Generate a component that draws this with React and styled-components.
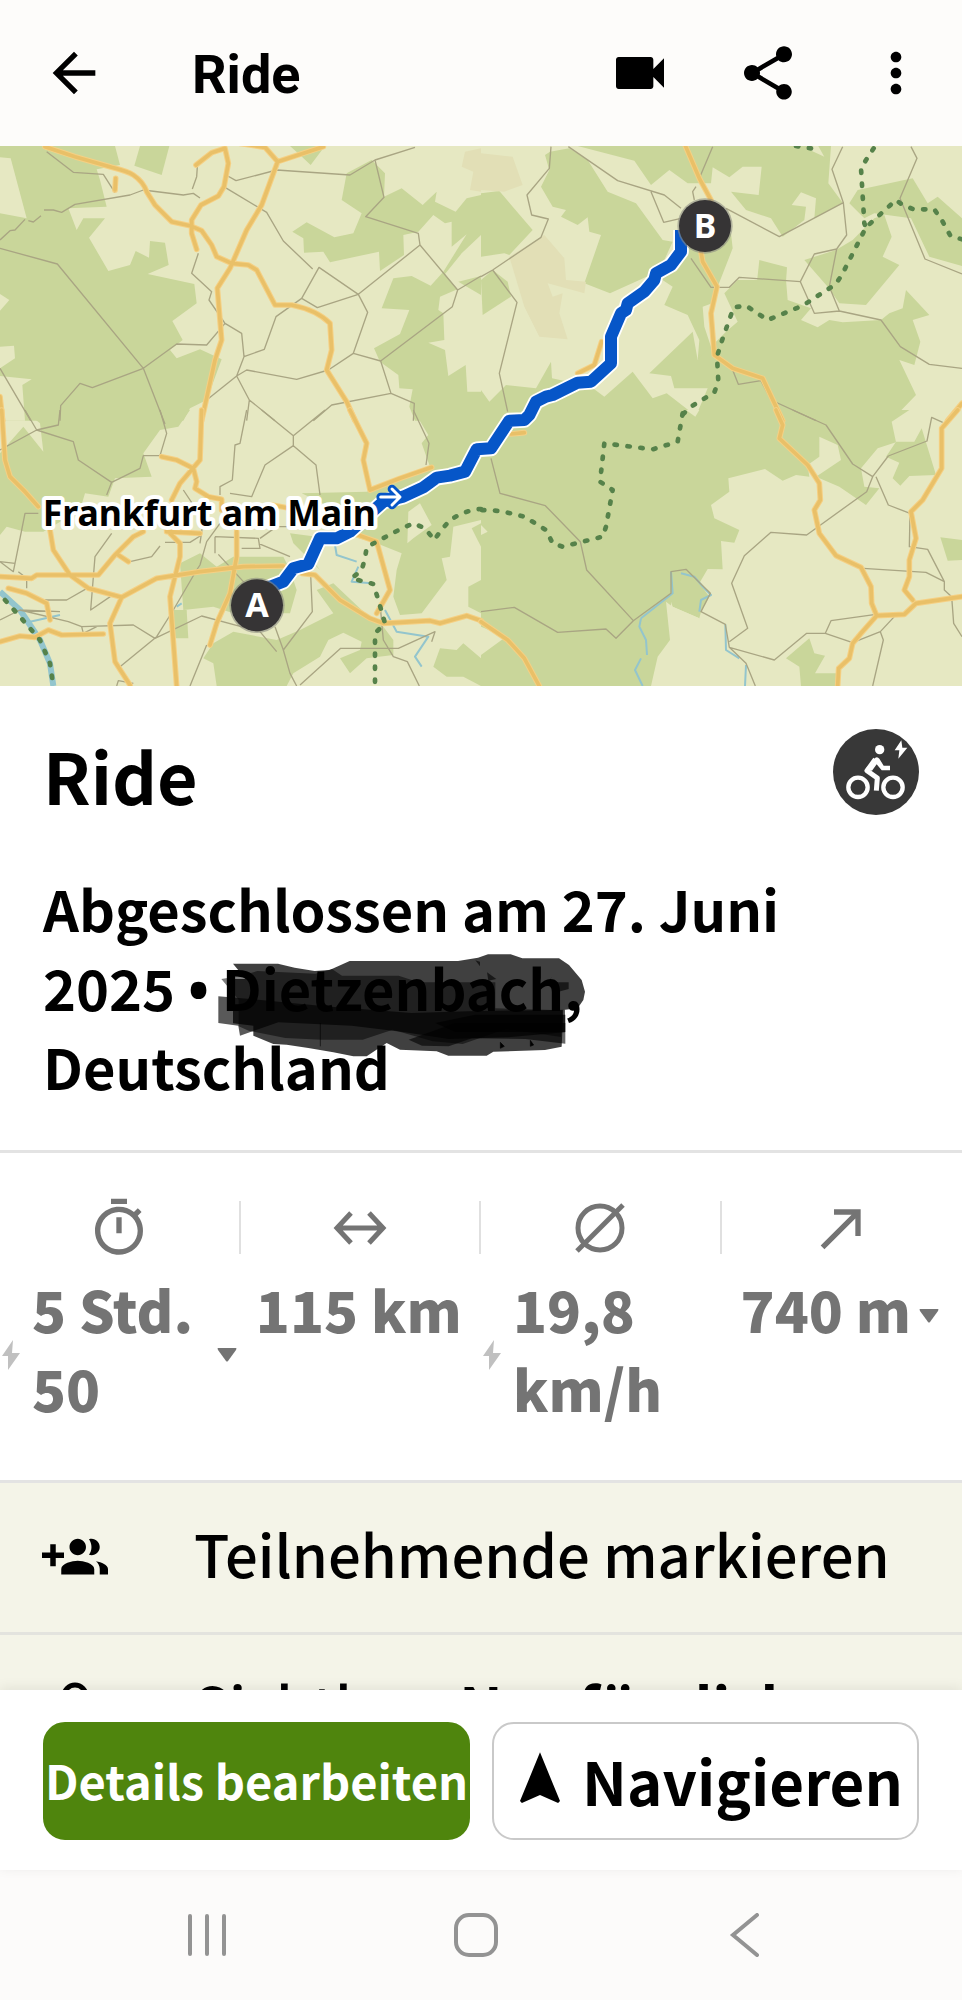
import React from 'react';
import styled, { createGlobalStyle, css } from 'styled-components';
import {
  MdArrowBack,
  MdVideocam,
  MdShare,
  MdMoreVert,
  MdOutlineTimer,
  MdCallMade,
  MdNavigation,
} from 'react-icons/md';

const stats = [
  { label: 'Dauer', value: '5 Std. 50', icon: <MdOutlineTimer />, electric: true, expandable: true },
  { label: 'Distanz', value: '115 km', icon: <DistanceIcon /> },
  { label: 'Durchschnitt', value: '19,8 km/h', icon: <AverageIcon />, electric: true },
  { label: 'Bergauf', value: '740 m', icon: <MdCallMade />, expandable: true },
];

// The map is drawn in four tiles, each with its own origin
const tiles = [
  {
    x: 0,
    y: -18,
    forest: [
      '0,18 345,18 360,75 290,88 300,120 320,200 205,205 230,270 250,235 315,235 267,293 325,393 390,375 407,333 447,353 450,303 495,308 506,375 443,402 583,432 590,490 517,543 548,600 510,630 530,655 600,628 665,658 620,780 570,805 550,842 0,842',
      '420,18 508,18 485,105 403,77',
      '870,18 975,18 932,75 900,45',
      '1040,100 1115,60 1155,100 1152,170 1205,145 1268,195 1310,155 1305,185 1367,215 1400,175 1443,165 1443,285 1385,340 1335,402 1372,448 1320,470 1315,510 1330,520 1333,600 1285,608 1335,630 1345,708 1397,675 1402,755 1443,755 1443,842 1245,842 1228,800 1238,748 1198,745 1195,705 1140,665 1122,625 1200,582 1228,510 1145,505 1180,415 1235,408 1292,437 1330,395 1400,283 1355,320 1355,245 1335,250 1300,225 1255,275 1210,285 1212,345 1140,393 1137,335 990,367 970,335 912,338 910,295 877,275 920,247 1003,292 1060,280 1085,220 1025,180',
      '1375,425 1443,408 1443,465',
    ],
    clearing: [
      '0,52 32,55 80,235 0,220',
      '0,462 28,480 0,512',
      '0,620 42,617 45,655 0,685',
      '0,708 95,718 67,735 75,842 0,842',
    ],
    sand: ['1395,35 1443,25 1443,155 1410,150 1420,95 1385,80'],
    lane: 'M140,35 220,97 310,103 345,158 M0,300 30,272 45,270 75,238 M85,242 100,246 123,227 M132,210 160,210 185,217 225,193 390,165 430,150 550,165 580,160 600,174 M0,325 172,372 430,685 495,852 M180,842 182,797 240,730 277,743 430,685 530,612 620,615 675,550 725,580 732,650 710,708 620,780 M0,685 92,842 M592,80 590,110 577,147 M678,105 708,122 830,90 1050,105 1125,60 1245,22 M675,142 800,217 850,303 938,387 M1125,60 1152,172 1097,230 1255,280 1260,315 1373,450 1357,500 1142,663 1173,760 1243,790 1240,842 M1260,315 1075,463 957,382 905,475 952,503 1075,463 1103,517 1060,640 985,690 890,718 740,690 710,708 748,780 740,842 M748,780 825,842 M905,475 828,530 793,628 732,650 M1060,640 1142,663 M1373,450 1443,408 M595,340 575,400 635,455 627,480 675,550 M940,842 995,795 1173,760',
    road: 'M135,20 225,50 335,82 Q385,95 400,105 430,125 440,155 L465,195 515,245 570,257 605,272 635,315 650,350 695,370 745,375 770,390 825,495 875,495 Q950,510 990,550 L995,630 980,690 1040,785 1065,842 M588,75 635,38 675,25 685,70 672,140 655,168 603,195 575,240 575,280 590,328 M720,10 795,22 833,65 970,20 M833,65 785,195 740,270 690,385 652,445 665,600 645,660 605,842 M347,115 345,150 M0,770 8,842',
  },
  {
    x: 1443,
    y: -18,
    forest: [
      '290,18 1050,18 1042,130 1085,188 1000,235 1005,175 960,157 932,195 975,200 970,240 905,290 870,235 795,210 750,155 833,165 842,80 785,80 745,112 695,82 690,130 620,130 565,90 510,135 460,62',
      '207,35 265,25 320,60 380,155 465,190 545,300 575,305 550,360 520,400 387,460 310,430 360,285 325,275 320,232 290,255 240,230 255,210 215,200 180,140 205,90 192,45',
      '620,320 750,280 755,325 710,440 680,520 700,640 650,660 655,600 620,525 550,495 575,440 530,410',
      '0,750 25,785 75,735 165,745 210,665 213,715 330,740 370,770 455,695 515,775 557,760 645,828 680,745 580,745 570,708 505,700 635,575 650,660 690,620 735,575 770,545 730,460 770,420 915,420 920,480 990,505 960,540 1010,562 1045,540 1085,547 1200,540 1225,520 1265,505 1275,450 1345,525 1295,540 1318,605 1300,675 1255,660 1305,765 1230,842 0,842',
      '835,360 918,382 915,425 828,425',
      '970,360 1065,330 1115,300 1180,235 1210,225 1232,290 1205,350 1255,375 1155,495 1075,490 1040,440',
      '1105,190 1130,150 1295,115 1340,190 1370,170 1443,235 1443,378 1345,350 1290,235 1180,220 1150,235',
      '0,160 55,153 155,270 85,345 70,340 0,350',
      '0,420 35,390 80,425 90,470 5,525',
    ],
    clearing: ['665,500 720,480 700,560 690,620 670,560', '975,25 1010,15 1030,50'],
    sand: [
      '0,40 95,50 125,135 70,155 0,150',
      '85,350 190,285 250,355 255,420 315,425 310,460 200,430 215,470 245,460 235,520 260,598 175,590 130,500',
    ],
    lane: 'M210,20 205,85 138,165 152,225 202,237 180,292 35,390 0,410 M35,390 108,487 55,700 80,815 M262,20 410,122 550,165 600,205 M510,155 548,247 600,235 M695,20 655,115 M640,180 635,155 645,140 M735,205 895,290 1087,188 1053,88 1085,20 M1087,188 1097,285 1067,327 1000,342 958,425 775,412 745,442 690,442 630,355 M958,425 1000,520 1075,513 1045,440 1067,327 M1075,513 1200,540 1258,620 1345,673 1443,685 M1290,20 1308,55 1257,175 1332,357 1443,402 M755,690 772,733 840,722 870,780 1005,842',
    road: 'M610,10 655,115 690,180 M660,335 665,365 708,440 690,520 700,645 755,685 845,715 905,842 M362,605 340,675 290,700 M1443,790 1400,842',
    border: 'M945,18 990,25 M1178,25 1155,60 1140,85 1150,250 1155,262 M1443,298 1408,287 1385,245 1360,208 1298,208 1265,195 1245,180 1155,262 1085,400 1065,432 965,497 860,540 795,497 758,502 720,610 708,650 712,725 700,757 630,800 603,825',
  },
  {
    x: 0,
    y: 792,
    forest: [
      '70,0 570,0 535,50 480,60 430,130 455,200 345,205 325,260 255,250 240,300 130,365 75,365 20,350 0,375 0,130 70,50 130,125 120,40',
      '1240,0 1443,0 1443,330 1360,350 1350,440 1325,445 1340,510 1265,610 1200,615 1180,560 1190,480 1205,430 1130,400 1060,380 1050,320 905,250 1100,245 1220,200 1290,170 1265,100 1285,75',
      '540,460 600,430 650,470 700,440 850,440 870,480 890,540 870,610 700,610 640,590 550,600',
      '640,700 700,665 830,690 900,660 1000,610 950,540 1000,520 1085,600 1150,650 1180,690 1180,735 1100,745 1050,790 1020,745 1080,720 1085,695 1030,668 985,690 960,740 880,790 860,828 650,828 640,760 610,745',
      '870,370 950,380 930,440 960,480 880,400',
      '520,600 560,600 565,685 525,685',
      '1300,770 1320,715 1370,720 1390,700 1443,745 1443,828 1390,800 1340,800',
      '1405,530 1443,510 1443,610 1405,590',
      '1415,355 1443,340 1443,410',
    ],
    clearing: ['1225,305 1260,280 1295,345 1240,385 1222,400'],
    water: 'M1005,405 1010,435 1070,455 M1075,470 1055,515 1115,520 M1155,600 1190,665 1285,680 1245,740 1265,770 M90,635 180,615 M530,590 545,580',
    river: 'M0,545 60,600 120,690 150,760 160,828',
    lane: 'M75,0 110,60 175,45 180,0 M0,120 110,60 220,95 235,150 335,217 420,175 430,137 480,137 500,70 480,0 M335,217 320,255 M115,310 75,310 45,460 0,455 40,485 45,460 M335,370 285,440 272,600 345,550 M740,0 720,100 705,105 697,210 660,230 660,255 M785,0 880,77 975,0 M880,77 880,107 948,165 960,255 M880,107 795,165 755,260 690,250 M600,465 590,480 520,600 470,680 360,770 M600,465 620,395 660,340 M0,630 60,600 205,635 245,650 400,645 465,685 605,618 780,665 830,725 M60,600 180,605 M645,380 775,385 780,415 725,415 M645,380 645,430 M655,433 735,520 M775,400 870,440 M932,495 937,605 850,720 825,650 M850,720 870,790 890,828 M900,825 1022,715 1195,715 1305,665 1295,695 M1140,580 1150,690 1180,740 1222,755 1258,828 M620,705 570,828 M135,570 200,570 270,530 M350,828 355,812 400,820 M495,397 570,397 605,375 M390,455 455,440 480,408 M1240,0 1287,100 1278,165 M550,240 610,330 600,400 M780,385 830,350 880,350 M55,485 80,505 80,535 M245,650 250,670 290,650',
    road: 'M605,0 600,150 540,220 515,270 M485,140 530,150 580,175 590,215 585,235 625,260 665,268 665,300 M1050,0 1100,100 1090,150 1110,240 M5,0 15,150 30,200 75,245 115,290 M150,360 160,420 210,495 265,535 365,562 M0,500 95,505 110,495 295,495 345,435 400,380 430,365 M355,435 385,455 M365,562 470,505 600,485 730,470 850,468 M500,360 540,400 540,440 510,560 530,828 M365,562 330,640 345,755 390,825 M710,365 710,440 690,550 650,640 630,705 M1110,240 1200,205 1295,172 M1060,370 1130,395 1170,540 1130,610 M905,490 945,495 1020,570 1110,625 1150,640 1290,632 1320,640 1400,617 1443,632 M25,535 80,550 140,580 150,630 M0,695 60,678 105,682 145,660 185,675 310,672 M815,285 870,295 M500,365 600,370',
    border: 'M1443,297 1425,298 1385,310 1350,330 1320,365 1303,390 1275,355 1240,340 1200,358 1130,395 1100,412 1095,445 1085,480 1055,505 1120,522 1135,570 1155,640 1125,670 1125,828 M15,570 60,620 120,690 150,760 160,828',
  },
  {
    x: 1443,
    y: 792,
    forest: [
      '0,0 1285,0 1232,35 1245,97 1190,115 1140,175 1150,230 1195,235 1155,285 1075,230 1005,200 1080,150 1070,105 1015,80 1015,140 980,165 985,200 945,195 905,212 852,177 742,205 745,245 690,285 700,325 775,360 760,398 720,393 725,478 680,477 655,520 685,560 660,605 655,625 575,590 555,575 567,690 530,740 510,828 0,828 0,735 75,680 0,650',
      '1245,95 1300,95 1322,55 1365,195 1285,198 1258,227 1235,205 1255,158 1215,140',
      '1378,382 1443,390 1443,450 1400,452',
      '915,745 985,685 1000,730 1032,737 1002,790 1065,790 1065,828 960,828 955,770',
    ],
    clearing: ['0,345 20,365 0,375', '615,0 655,0 643,20', '570,575 575,590 655,625 567,690'],
    water: 'M480,625 475,650 495,690 498,735 M480,745 462,780 485,828 M570,485 575,550 480,625 M733,643 735,720 775,745 M600,490 640,500 665,530 690,555 660,570 655,605 M795,765 792,828',
    lane: 'M30,145 57,250 193,287 298,395 317,480 457,632 570,550 570,485 615,478 688,550 660,605 733,643 745,712 880,750 977,670 1033,670 1050,632 1185,613 M0,605 100,592 230,667 375,657 405,685 457,632 M745,712 795,760 823,828 M745,695 800,655 752,520 790,437 870,367 977,375 1157,245 1175,200 1115,162 1035,45 935,0 M1175,200 1222,138 1338,93 1352,22 1385,37 M1185,200 1222,285 1287,310 1285,410 1340,418 1390,515 1390,540 1412,560 1418,640 1443,680 M1147,475 1335,487 1390,515 M1033,670 1115,698 1198,665 1240,620 M1198,665 1207,690 1175,828',
    road: 'M885,0 905,45 895,85 980,165 1015,220 1018,270 1000,300 1015,370 1065,437 1140,472 1170,530 1172,580 1187,617 1140,670 1115,700 1105,745 1073,775 1070,828 M1187,617 1270,613 1305,580 1443,560 M1430,0 1382,55 1382,175 1325,270 1290,305 1305,385 1285,450 1285,500 1270,540 1295,570 M90,72 130,68 M0,635 80,690 130,745 175,828',
    border: 'M605,10 590,95 515,118 370,100 357,215 395,240 375,350 365,380 245,410 215,400 195,360 130,320 60,303 0,300',
  },
];

const route =
  'M2043,252 2043,317 2013,357 1968,382 1963,402 1933,437 1883,472 1878,492 1863,502 1833,572 1833,652 1773,707 1733,710 1658,747 1638,752 1608,767 1588,807 1573,822 1528,824 1473,907 1430,910 1395,977 1350,989 1310,995 1270,1024 1210,1052 1150,1067 1050,1157 1010,1177 960,1177 925,1254 880,1267 850,1307 790,1330';

const App = () => {
  return (
    <Screen>
      <GlobalStyle />

      <TopBar>
        <IconButton aria-label="Zurück"><MdArrowBack /></IconButton>
        <TopTitle>Ride</TopTitle>
        <IconButton aria-label="Video"><MdVideocam /></IconButton>
        <IconButton aria-label="Teilen"><MdShare /></IconButton>
        <IconButton aria-label="Mehr"><MdMoreVert /></IconButton>
      </TopBar>

      <Content>
        <RouteMap />

        <Summary>
          <SummaryHead>
            <h1>Ride</h1>
            <EBikeIcon />
          </SummaryHead>
          <Meta>
            Abgeschlossen am 27. Juni 2025 <Bullet>•</Bullet>{' '}
            <Place>
              Dietzenbach,
              <Scribble />
            </Place>{' '}
            Deutschland
          </Meta>
        </Summary>

        <Stats>
          {stats.map((stat) => (
            <Stat key={stat.label} aria-label={stat.label}>
              <StatIcon>{stat.icon}</StatIcon>
              <StatRow>
                {stat.electric && <BoltIcon />}
                <StatValue $grow={stat.electric}>{stat.value}</StatValue>
                {stat.expandable && <CaretIcon />}
              </StatRow>
            </Stat>
          ))}
        </Stats>

        <OptionRow>
          <GroupAddIcon />
          <OptionLabel>Teilnehmende markieren</OptionLabel>
        </OptionRow>
        <OptionRow>
          <PersonIcon />
          <OptionLabel>Sichtbar: <b>Nur für dich</b></OptionLabel>
        </OptionRow>
      </Content>

      <ActionBar>
        <ActionButton $primary>Details bearbeiten</ActionButton>
        <ActionButton>
          <MdNavigation />
          Navigieren
        </ActionButton>
      </ActionBar>

      <SystemBar>
        <SystemButton aria-label="Letzte Apps">
          <svg viewBox="0 0 44 44"><path d="M5 3v38M22 3v38M39 3v38" /></svg>
        </SystemButton>
        <SystemButton aria-label="Startseite">
          <svg viewBox="0 0 44 44"><rect x="2" y="2" width="40" height="40" rx="13" /></svg>
        </SystemButton>
        <SystemButton aria-label="Zurück">
          <svg viewBox="0 0 44 44"><path d="M34 2L10 22l24 20" /></svg>
        </SystemButton>
      </SystemBar>
    </Screen>
  );
};

function RouteMap() {
  return (
    <MapSvg viewBox="0 0 2886 1620" preserveAspectRatio="xMidYMid slice" role="img" aria-label="Karte der Tour">
      <rect width="2886" height="1620" fill="#e6e8c2" />
      {tiles.map((tile) => (
        <g key={`area-${tile.x}-${tile.y}`} transform={`translate(${tile.x} ${tile.y})`}>
          {tile.forest.map((points) => <polygon key={points} points={points} fill="#c9d69a" />)}
          {tile.clearing.map((points) => <polygon key={points} points={points} fill="#e6e8c2" />)}
          {(tile.sand || []).map((points) => <polygon key={points} points={points} fill="#e2dfb6" />)}
        </g>
      ))}
      {tiles.map((tile) => (
        <g
          key={`line-${tile.x}-${tile.y}`}
          transform={`translate(${tile.x} ${tile.y})`}
          fill="none"
          strokeLinejoin="round"
        >
          <path d={tile.water} stroke="#93c5cd" strokeWidth="6" />
          <path d={tile.river} stroke="#93c5cd" strokeWidth="18" />
          <path d={tile.lane} stroke="#a9a583" strokeWidth="4" />
          <path d={tile.road} stroke="#f5d084" strokeWidth="17" strokeLinecap="round" />
          <path d={tile.road} stroke="#e9c068" strokeWidth="11" strokeLinecap="round" />
          <path d={tile.border} stroke="#56824a" strokeWidth="14" strokeLinecap="round" strokeDasharray="7 32" />
        </g>
      ))}
      <g fill="none" strokeLinejoin="round">
        <path d={route} stroke="#fff" strokeWidth="47" />
        <path d={route} stroke="#0656c8" strokeWidth="36" />
      </g>
      <g strokeLinejoin="round" strokeLinecap="round" fill="none">
        <path d="M1142 1053h56m-22-24 24 24-24 24" stroke="#0656c8" strokeWidth="26" />
        <path d="M1142 1053h56m-22-24 24 24-24 24" stroke="#fff" strokeWidth="9" />
      </g>
      <CityLabel x="128" y="1139">Frankfurt am Main</CityLabel>
      <Pin x={2115} y={240} letter="B" />
      <Pin x={771} y={1378} letter="A" />
    </MapSvg>
  );
}

function Pin({ x, y, letter }) {
  return (
    <g>
      <circle cx={x} cy={y} r="83" fill="#8a8a80" opacity="0.6" />
      <circle cx={x} cy={y} r="78" fill="#363435" />
      <PinLabel x={x} y={y + 36} textAnchor="middle">{letter}</PinLabel>
    </g>
  );
}

function EBikeIcon() {
  return (
    <svg width="86" height="86" viewBox="0 0 258 258" fill="none" aria-label="E-Bike">
      <circle cx="129" cy="129" r="129" fill="#383838" />
      <g stroke="#fff" strokeWidth="13">
        <circle cx="75" cy="175" r="29" />
        <circle cx="180" cy="175" r="29" />
      </g>
      <circle cx="140" cy="62" r="14" fill="#fff" />
      <path d="M127 91L102 125l31 22-3 38" stroke="#fff" strokeWidth="15" strokeLinejoin="round" />
      <path d="M126 87q7-6 13 2l13 21h19v14h-25l-15-18-14 19-20-4z" fill="#fff" />
      <path d="M205 34l-20 30h14l-3 25 27-33h-15z" fill="#fff" />
    </svg>
  );
}

function Scribble() {
  return (
    <ScribbleSvg viewBox="65 40 1110 312" aria-hidden="true">
      <path d="M113 72h135l50 12 60 10 45-3 60-27h325l60-10 30-10h68l35 12h110l30 20 38 45 10 35-5 25-17 25-43 5-5 110-50 10-155 5-20 12h-115l-35-13-110-5-40-20-60 40h-40l-60-12-75-13-65-10-40-2-60-25v-30l-61-7V118h38z" fill="#000" fillOpacity="0.75" />
      <path d="M78 118l60-10 48-14 174 8 50-14 30 20h170l60 20h230v78l200 6-3 80-165-24-130 45-90-8-120-35-90 30H380l-110-5-110-22-30-13v-80z" fill="#000" fillOpacity="0.5" />
      <path d="M69 170l120 10 200 20 260 20 170-5 290-5v68l-170 15-180 5-130-20-160-20-220-10-115 40-5-30-60-8z" fill="#000" fillOpacity="0.65" />
      <path d="M720 250l120-25h270v52H780z" fill="#000" fillOpacity="0.7" />
      <path d="M640 300l140-50h330v62l-120-14-160-2-70 24-80-2z" fill="#000" fillOpacity="0.6" />
      <path d="M840 62l14 4v14zM875 98l28 20-24 5zM1070 110l-10 18h60v20l-30 8-30-24z" fill="#000" fillOpacity="0.6" />
      <path d="M375 250v70M915 308v18l12-6zM1005 302v18l10-4z" stroke="#000" strokeWidth="3" strokeOpacity="0.6" />
    </ScribbleSvg>
  );
}

function DistanceIcon() {
  return (
    <svg viewBox="0 0 64 64" fill="none" stroke="currentColor" strokeWidth="5">
      <path d="M8 32h48M23 17L9 32l14 15M41 17l14 15-14 15" />
    </svg>
  );
}

function AverageIcon() {
  return (
    <svg viewBox="0 0 64 64" fill="none" stroke="currentColor" strokeWidth="5">
      <circle cx="32" cy="32" r="22" />
      <path d="M9 55L55 9" />
    </svg>
  );
}

function BoltIcon() {
  return (
    <svg width="20" height="30" viewBox="0 0 20 30" fill="#c0c0c0" aria-hidden="true">
      <path d="M13 0L2 16h6v14L20 13h-8z" />
    </svg>
  );
}

function CaretIcon() {
  return (
    <svg width="20" height="14" viewBox="0 0 20 14" fill="currentColor" aria-hidden="true">
      <path d="M1 0h18q1 0 0 2l-8 11q-1 1-2 0L1 2q-1-2 0-2z" />
    </svg>
  );
}

function GroupAddIcon() {
  return (
    <svg width="66" height="66" viewBox="0 0 24 24" aria-hidden="true">
      <path d="M8 10H5V7H3v3H0v2h3v3h2v-3h3v-2zm10 1c1.66 0 2.99-1.34 2.99-3S19.66 5 18 5c-.32 0-.63.05-.91.14.57.81.9 1.79.9 2.86s-.34 2.04-.9 2.86c.28.09.59.14.91.14zm-5 0c1.66 0 2.99-1.34 2.99-3S14.66 5 13 5c-1.66 0-3 1.34-3 3s1.34 3 3 3zm6.62 2.16c.83.73 1.38 1.66 1.38 2.84v2h3v-2c0-1.54-2.37-2.49-4.38-2.84zM13 13c-2 0-6 1-6 3v2h12v-2c0-2-4-3-6-3z" />
    </svg>
  );
}

function PersonIcon() {
  return (
    <svg width="66" height="66" viewBox="0 0 66 66" fill="none" stroke="#000" strokeWidth="5" aria-hidden="true">
      <circle cx="33" cy="19" r="11" />
      <path d="M10 56c0-22 46-22 46 0z" />
    </svg>
  );
}

// Styled Components
const GlobalStyle = createGlobalStyle`
  * {
    box-sizing: border-box;
  }

  body {
    margin: 0;
    background: #fff;
    color: #000;
    font-family: 'Noto Sans CJK SC', 'Noto Sans', sans-serif;
  }

  button {
    font: inherit;
    color: inherit;
    cursor: pointer;
  }

  svg {
    flex: none;
  }
`;

const Screen = styled.div`
  display: flex;
  flex-direction: column;
  height: 100vh;
  overflow: hidden;
`;

const TopBar = styled.header`
  display: flex;
  align-items: center;
  gap: 64px;
  padding: 39px 34px 39px 42px;
  background: #fdfcfa;
`;

const IconButton = styled.button`
  display: flex;
  padding: 0;
  border: 0;
  background: none;

  svg {
    width: 64px;
    height: 64px;
  }
`;

const TopTitle = styled.div`
  flex: 1;
  padding: 4px 0 0 22px;
  font-family: Roboto, sans-serif;
  font-size: 54px;
  font-weight: 700;
  line-height: 64px;
`;

const Content = styled.main`
  flex: 1;
  min-height: 0;
  overflow-y: auto;
  scrollbar-width: none;
`;

const MapSvg = styled.svg`
  display: block;
  width: 100%;
  height: 540px;
`;

const CityLabel = styled.text`
  font-family: 'Noto Sans', sans-serif;
  font-size: 107px;
  font-weight: 700;
  fill: #000;
  stroke: #fff;
  stroke-width: 24px;
  stroke-linejoin: round;
  paint-order: stroke;
`;

const PinLabel = styled.text`
  font-family: 'Noto Sans', sans-serif;
  font-size: 102px;
  font-weight: 700;
  fill: #fff;
`;

const Summary = styled.section`
  padding: 43px 43px 45px;
  border-bottom: 3px solid #e3e3e3;
`;

const SummaryHead = styled.div`
  display: flex;
  align-items: flex-end;
  justify-content: space-between;

  h1 {
    margin: 0;
    font-size: 70px;
    font-weight: 700;
    line-height: 80px;
  }
`;

const Meta = styled.p`
  margin: 53px 0 0;
  font-size: 56px;
  font-weight: 700;
  line-height: 79px;
`;

const Bullet = styled.span`
  font-family: 'Open Sans', sans-serif;
  line-height: 1;
`;

const Place = styled.span`
  position: relative;
  white-space: nowrap;
`;

const ScribbleSvg = styled.svg`
  position: absolute;
  top: 7px;
  left: -5px;
  width: 370px;
  height: 104px;
`;

const Stats = styled.section`
  display: grid;
  grid-template-columns: repeat(4, 1fr);
  padding: 48px 0 53px;
  color: #747474;
  border-bottom: 3px solid #e3e3e3;
`;

const StatIcon = styled.div`
  display: flex;
  align-items: center;
  justify-content: center;
  height: 53px;
  border-right: 2px solid #e0e0e0;

  svg {
    width: 64px;
    height: 64px;
  }
`;

const Stat = styled.div`
  min-width: 0;

  &:last-child ${StatIcon} {
    border-right: 0;
  }
`;

const StatRow = styled.div`
  display: flex;
  align-items: center;
  justify-content: center;
  gap: 8px;
  margin-top: 15px;
  padding-right: 4px;

  svg {
    margin-top: 14px;
  }
`;

const StatValue = styled.div`
  font-size: 56px;
  font-weight: 900;
  line-height: 79px;

  ${(props) => props.$grow && css`
    flex: 1;
    padding-left: 4px;
  `}
`;

const OptionRow = styled.div`
  display: flex;
  align-items: center;
  gap: 86px;
  height: 152px;
  padding: 0 42px;
  background: #f4f4e8;
  border-bottom: 3px solid #e3e3de;
`;

const OptionLabel = styled.div`
  padding-bottom: 10px;
  font-size: 58px;
  font-weight: 500;
  line-height: 80px;
  white-space: nowrap;
`;

const ActionBar = styled.footer`
  position: relative;
  display: grid;
  grid-template-columns: 1fr 1fr;
  gap: 22px;
  padding: 32px 43px 30px;
  background: #fff;
  box-shadow: 0 -2px 12px rgba(0, 0, 0, 0.08);
`;

const ActionButton = styled.button`
  display: flex;
  align-items: center;
  justify-content: center;
  gap: 10px;
  height: 118px;
  min-width: 0;
  padding: 0 0 4px;
  border: 2px solid #c9c9c9;
  border-radius: 22px;
  background: #fff;
  font-size: 60px;
  font-weight: 700;
  white-space: nowrap;

  svg {
    width: 64px;
    height: 64px;
  }

  ${(props) => props.$primary && css`
    border-color: #4f850d;
    background: #4f850d;
    color: #fff;
    font-size: 47px;
  `}
`;

const SystemBar = styled.nav`
  display: grid;
  grid-template-columns: repeat(3, 1fr);
  padding: 0 82px 0 72px;
  background: #fcfbfa;
`;

const SystemButton = styled.button`
  display: flex;
  align-items: center;
  justify-content: center;
  height: 130px;
  padding: 0;
  border: 0;
  background: none;

  svg {
    width: 44px;
    height: 44px;
    fill: none;
    stroke: #939393;
    stroke-width: 4px;
    stroke-linecap: round;
  }
`;

export default App;
